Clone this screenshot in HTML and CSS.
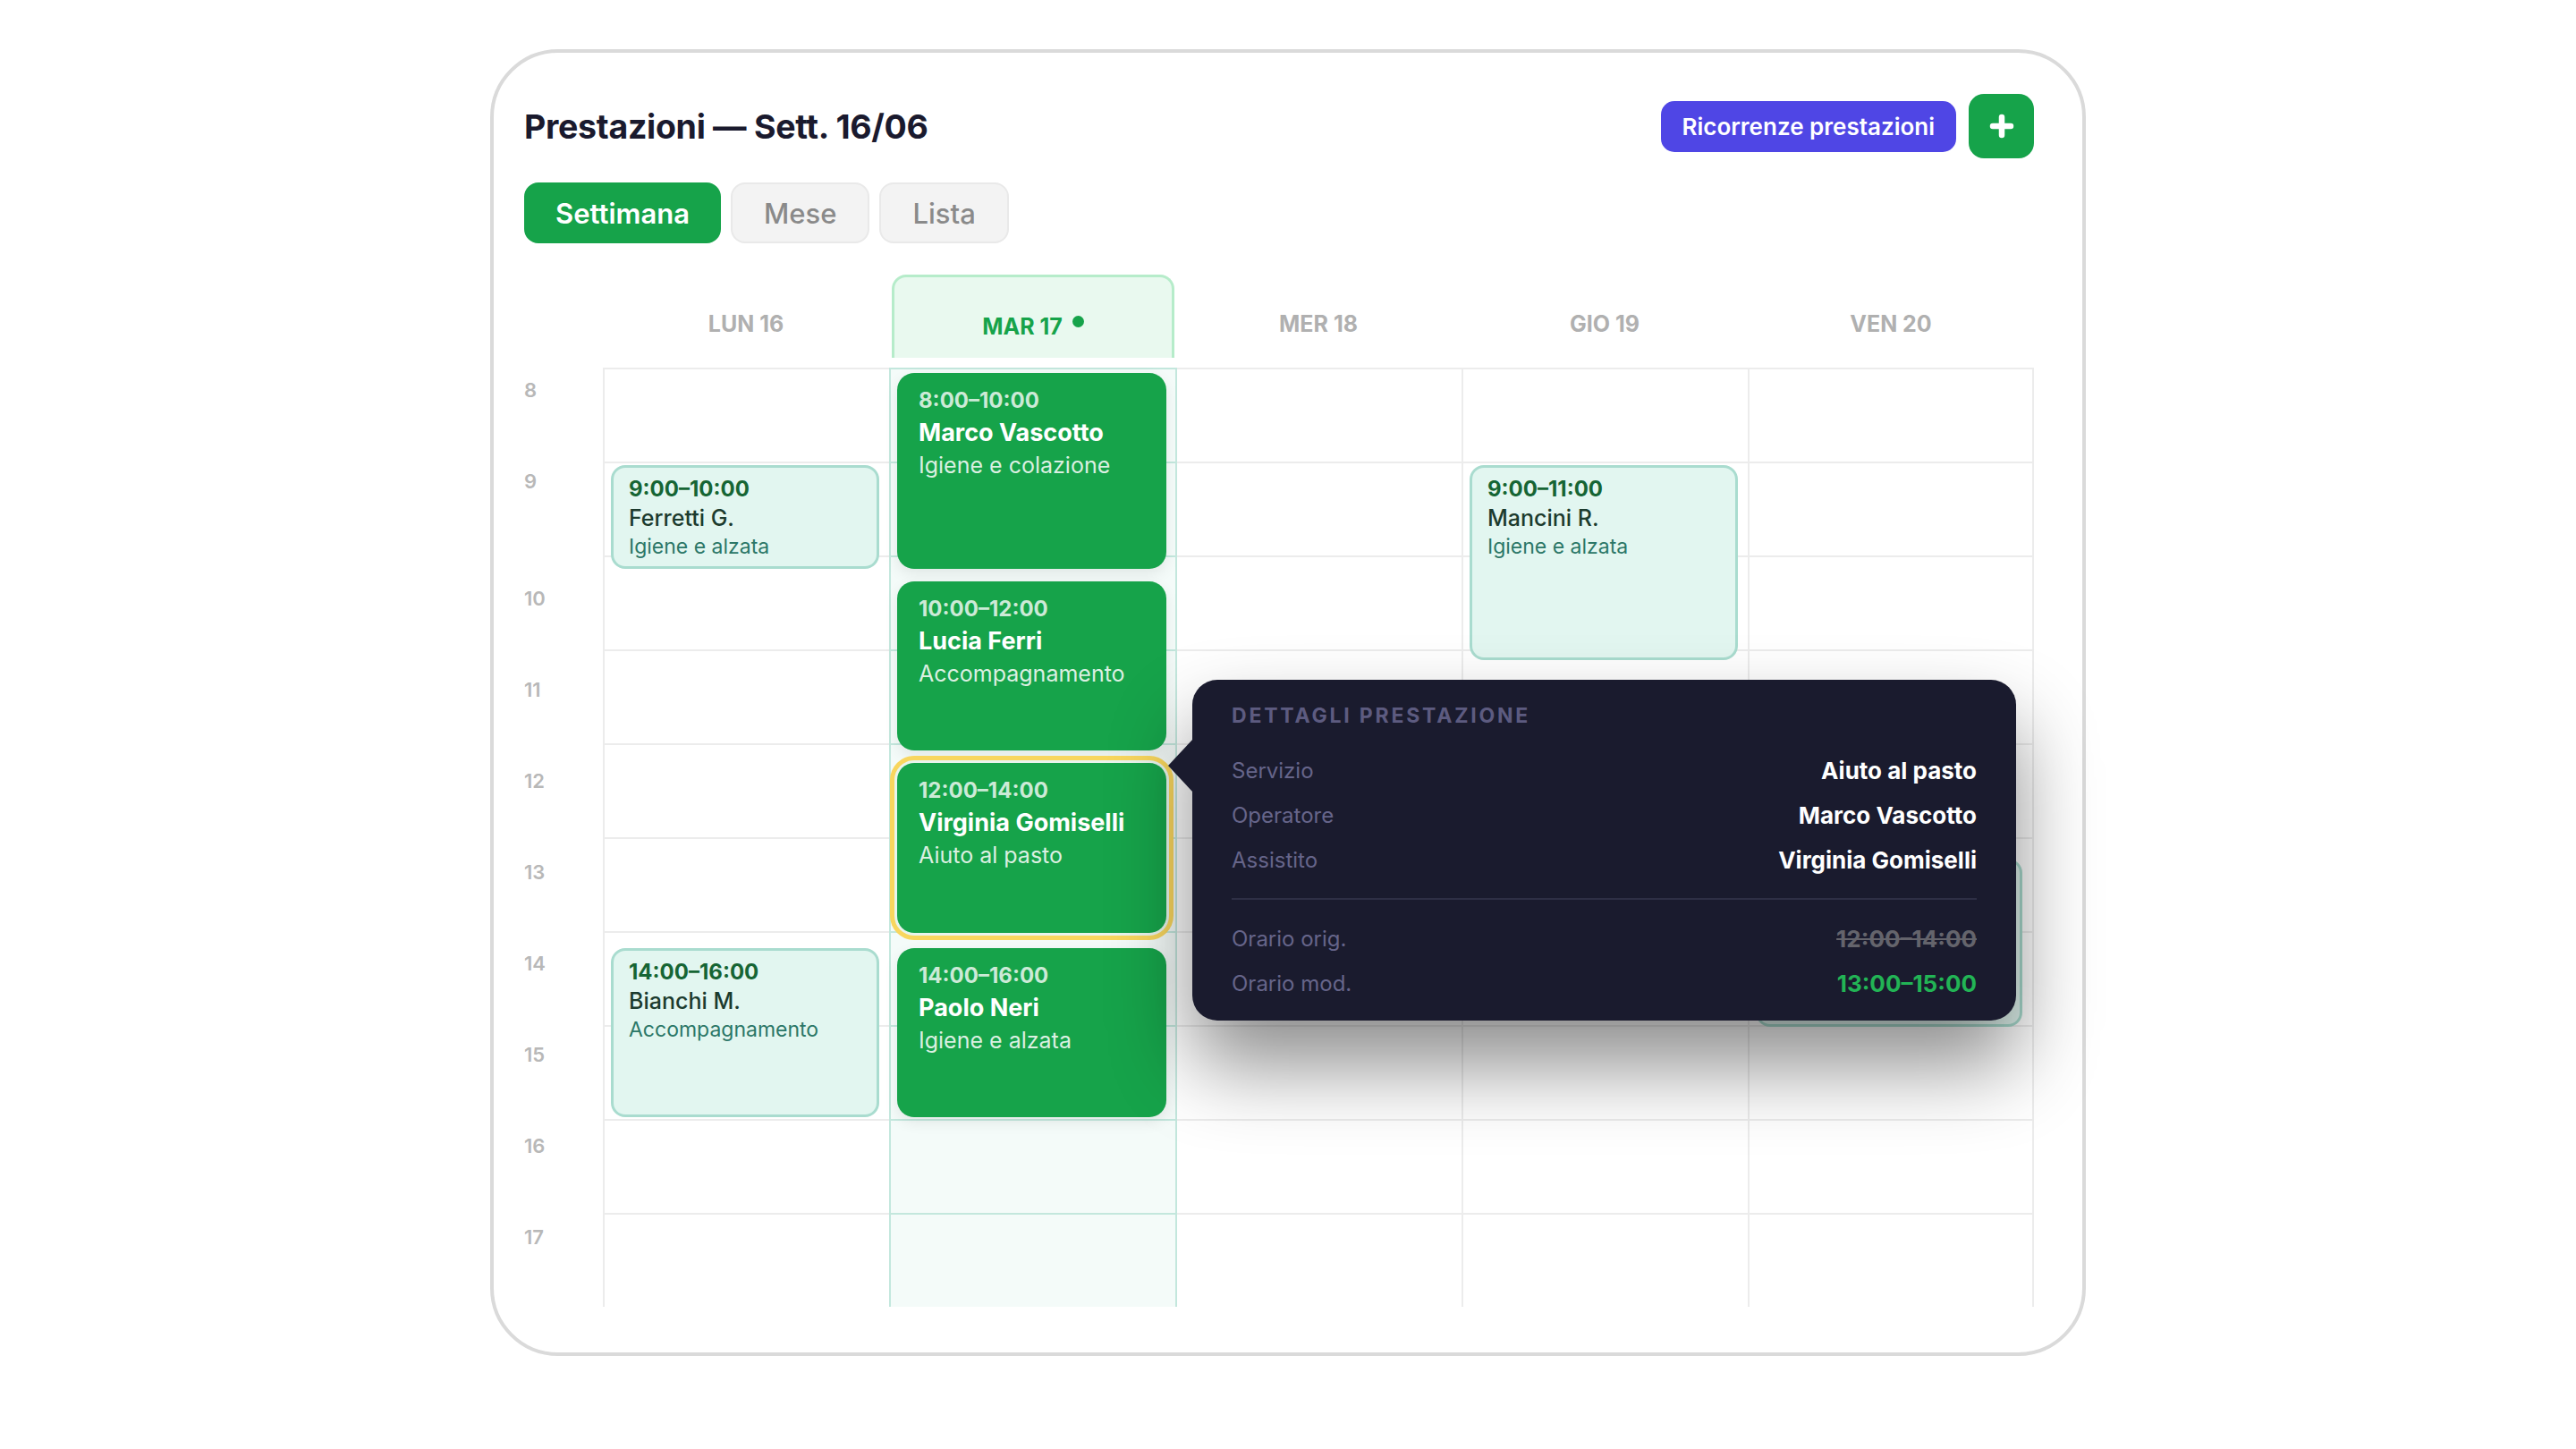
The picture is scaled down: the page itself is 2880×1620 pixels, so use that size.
FILE: index.html
```html
<!DOCTYPE html>
<html>
  <head>
    <meta charset="utf-8">
    <title>Prestazioni</title>
    <link rel="stylesheet" href="styles.css">
  </head>
  <body>

    <div class="card">
      <div class="head">
        <h1 class="title">Prestazioni — Sett. 16/06</h1>
        <div class="actions">
          <button class="btn-recur">Ricorrenze prestazioni</button>
          <button class="btn-add" aria-label="Nuova prestazione">
            <svg width="28" height="28" viewBox="0 0 28 28">
              <path d="M14 4v20M4 14h20" stroke="#fff" stroke-width="6.5" stroke-linecap="round" fill="none"/>
            </svg>
          </button>
        </div>
      </div>

      <div class="tabs">
        <button class="tab active">Settimana</button>
        <button class="tab">Mese</button>
        <button class="tab">Lista</button>
      </div>

      <div class="week">
        <div></div>
        <div class="day-head">LUN 16</div>
        <div class="day-head today">MAR 17<span class="dot"></span></div>
        <div class="day-head">MER 18</div>
        <div class="day-head">GIO 19</div>
        <div class="day-head">VEN 20</div>

        <div class="hours">
          <span>8</span>
          <span class="long">9</span>
          <span>10</span>
          <span>11</span>
          <span>12</span>
          <span>13</span>
          <span>14</span>
          <span>15</span>
          <span>16</span>
          <span>17</span>
        </div>

        <!-- lunedi -->
        <div class="day">
          <div class="ev soft" style="top:109px;height:116px">
            <div class="ev-time">9:00–10:00</div>
            <div class="ev-name">Ferretti G.</div>
            <div class="ev-sub">Igiene e alzata</div>
          </div>
          <div class="ev soft" style="top:649px;height:189px">
            <div class="ev-time">14:00–16:00</div>
            <div class="ev-name">Bianchi M.</div>
            <div class="ev-sub">Accompagnamento</div>
          </div>
        </div>

        <!-- martedi (oggi) -->
        <div class="day today">
          <div class="ev solid" style="top:6px;height:219px">
            <div class="ev-time">8:00–10:00</div>
            <div class="ev-name">Marco Vascotto</div>
            <div class="ev-sub">Igiene e colazione</div>
          </div>
          <div class="ev solid" style="top:239px;height:189px">
            <div class="ev-time">10:00–12:00</div>
            <div class="ev-name">Lucia Ferri</div>
            <div class="ev-sub">Accompagnamento</div>
          </div>
          <div class="ev solid selected" style="top:442px;height:190px">
            <div class="ev-time">12:00–14:00</div>
            <div class="ev-name">Virginia Gomiselli</div>
            <div class="ev-sub">Aiuto al pasto</div>
          </div>
          <div class="ev solid" style="top:649px;height:189px">
            <div class="ev-time">14:00–16:00</div>
            <div class="ev-name">Paolo Neri</div>
            <div class="ev-sub">Igiene e alzata</div>
          </div>
        </div>

        <!-- mercoledi -->
        <div class="day after-today"></div>

        <!-- giovedi -->
        <div class="day">
          <div class="ev soft" style="top:109px;height:218px">
            <div class="ev-time">9:00–11:00</div>
            <div class="ev-name">Mancini R.</div>
            <div class="ev-sub">Igiene e alzata</div>
          </div>
        </div>

        <!-- venerdi: slot spostato, coperto dal popover -->
        <div class="day last">
          <div class="ev soft" style="top:549px;height:188px"></div>
        </div>

        <!-- popover dettagli -->
        <div class="tip">
          <div class="tip-title">Dettagli prestazione</div>
          <div class="tip-row"><span class="tip-label">Servizio</span><span class="tip-value">Aiuto al pasto</span></div>
          <div class="tip-row"><span class="tip-label">Operatore</span><span class="tip-value">Marco Vascotto</span></div>
          <div class="tip-row"><span class="tip-label">Assistito</span><span class="tip-value">Virginia Gomiselli</span></div>
          <div class="tip-sep"></div>
          <div class="tip-row"><span class="tip-label">Orario orig.</span><span class="tip-value old">12:00–14:00</span></div>
          <div class="tip-row"><span class="tip-label">Orario mod.</span><span class="tip-value new">13:00–15:00</span></div>
        </div>
      </div>
    </div>

  </body>
</html>
```

FILE: styles.css
```css
body {
  margin: 0;
  background-color: #fff;
  font-family: Inter, "Noto Sans", sans-serif;
  color: #1a1a2e;
}

button {
  font-family: inherit;
  cursor: pointer;
}

.card {
  box-sizing: border-box;
  width: 1784px;
  margin: 55px auto 0;
  padding: 46px 54px 51px 34px;
  border: 4px solid #dadada;
  border-radius: 76px;
  background-color: #fff;
}

/* header */
.head {
  display: flex;
  justify-content: space-between;
  align-items: center;
  height: 72px;
}
.title {
  margin: 0;
  font-size: 37.5px;
  font-weight: 700;
  letter-spacing: -0.3px;
  color: #1a1a2e;
}
.actions {
  display: flex;
  align-items: center;
  gap: 14px;
}
.btn-recur {
  height: 57px;
  padding: 0 24px;
  border: none;
  border-radius: 15px;
  background-color: #4f46e5;
  color: #fff;
  font-size: 26px;
  font-weight: 600;
}
.btn-add {
  display: flex;
  align-items: center;
  justify-content: center;
  width: 73px;
  height: 72px;
  padding: 0;
  border: none;
  border-radius: 17px;
  background-color: #16a34a;
}

/* view switch */
.tabs {
  display: flex;
  gap: 11px;
  margin-top: 27px;
}
.tab {
  box-sizing: border-box;
  height: 68px;
  padding: 0 35px;
  border: 2px solid #e9e9e9;
  border-radius: 16px;
  background-color: #f3f3f3;
  color: #8a8a8a;
  font-size: 31px;
  font-weight: 500;
}
.tab.active {
  padding: 0 33px;
  border-color: #16a34a;
  background-color: #16a34a;
  color: #fff;
  font-weight: 600;
}

/* week grid */
.week {
  position: relative;
  display: grid;
  grid-template-columns: 88px repeat(5, 320px);
  grid-template-rows: 93px 1050px;
  row-gap: 11px;
  margin-top: 35px;
}
.day-head {
  display: flex;
  align-items: flex-end;
  justify-content: center;
  padding-bottom: 23px;
  box-sizing: border-box;
  font-size: 25px;
  font-weight: 700;
  line-height: 30px;
  color: #b0b0b0;
}
.day-head.today {
  margin: 0 1px 0 3px;
  padding-bottom: 20px;
  border: 3px solid #b6ecca;
  border-bottom: none;
  border-radius: 16px 16px 0 0;
  background-color: #e9f9ef;
  color: #16a34a;
}
.dot {
  width: 13px;
  height: 13px;
  margin: 0 0 14px 11px;
  border-radius: 50%;
  background-color: #16a34a;
}

.hours {
  padding-top: 13px;
  box-sizing: border-box;
}
.hours span {
  display: block;
  height: 102px;
  font-size: 22px;
  font-weight: 600;
  line-height: 24px;
  color: #b8b8b8;
}
.hours span.long {
  height: 131px;
}

.day {
  position: relative;
  box-sizing: border-box;
  border-left: 2px solid #ececec;
  background: repeating-linear-gradient(to bottom, #ececec 0 2px, transparent 2px 105px);
}
.day.last {
  border-right: 2px solid #ececec;
}
.day.today {
  border-left-color: #c3e7dd;
  background: repeating-linear-gradient(to bottom, #c3e7dd 0 2px, #f4fbf9 2px 105px);
}
.day.after-today {
  border-left-color: #c3e7dd;
}

/* events */
.ev {
  position: absolute;
  left: 7px;
  right: 11px;
  box-sizing: border-box;
  border-radius: 16px;
  overflow: hidden;
}
.ev.soft {
  padding: 8px 17px;
  border: 3px solid #a9dccf;
  background-color: #e2f6f0;
}
.ev.soft .ev-time {
  font-size: 24px;
  font-weight: 700;
  line-height: 31px;
  color: #166534;
}
.ev.soft .ev-name {
  font-size: 25px;
  font-weight: 500;
  line-height: 34px;
  color: #1c3b2e;
}
.ev.soft .ev-sub {
  font-size: 23px;
  line-height: 30px;
  color: #2b7767;
}

.ev.solid {
  right: 10px;
  padding: 16px 24px;
  border-radius: 19px;
  background-color: #16a34a;
  color: #fff;
  box-shadow: 0 6px 16px rgba(0, 0, 0, 0.08);
}
.ev.solid .ev-time {
  font-size: 24px;
  font-weight: 700;
  line-height: 30px;
  color: rgba(255, 255, 255, 0.78);
}
.ev.solid .ev-name {
  font-size: 27px;
  font-weight: 700;
  line-height: 42px;
}
.ev.solid .ev-sub {
  font-size: 25px;
  line-height: 30px;
  color: rgba(255, 255, 255, 0.85);
}
.ev.selected {
  box-shadow: 0 0 0 3px #e8f4ec, 0 0 0 8px #f8d65e;
  overflow: visible;
}

/* detail popover */
.tip {
  position: absolute;
  left: 747px;
  top: 453px;
  z-index: 5;
  width: 921px;
  box-sizing: border-box;
  padding: 25px 44px 24px;
  border-radius: 28px;
  background-color: #1a1b2e;
  box-shadow: 0 50px 90px rgba(0, 0, 0, 0.45);
}
.tip::before {
  content: "";
  position: absolute;
  left: -27px;
  top: 66px;
  border-top: 30px solid transparent;
  border-bottom: 30px solid transparent;
  border-right: 28px solid #1a1b2e;
}
.tip-title {
  margin-bottom: 28px;
  font-size: 23px;
  font-weight: 700;
  line-height: 30px;
  letter-spacing: 2.8px;
  text-transform: uppercase;
  color: #5d5b80;
}
.tip-row {
  display: flex;
  justify-content: space-between;
  align-items: center;
  height: 36px;
  margin-bottom: 14px;
}
.tip-row:last-child {
  margin-bottom: 0;
}
.tip-label {
  font-size: 24px;
  color: #66658a;
}
.tip-value {
  font-size: 26px;
  font-weight: 700;
  color: #fff;
}
.tip-value.old {
  color: #64646c;
  text-decoration: line-through;
}
.tip-value.new {
  color: #22b455;
}
.tip-sep {
  height: 2px;
  margin: 25px 0 25px;
  background-color: #2e2f45;
}
```
